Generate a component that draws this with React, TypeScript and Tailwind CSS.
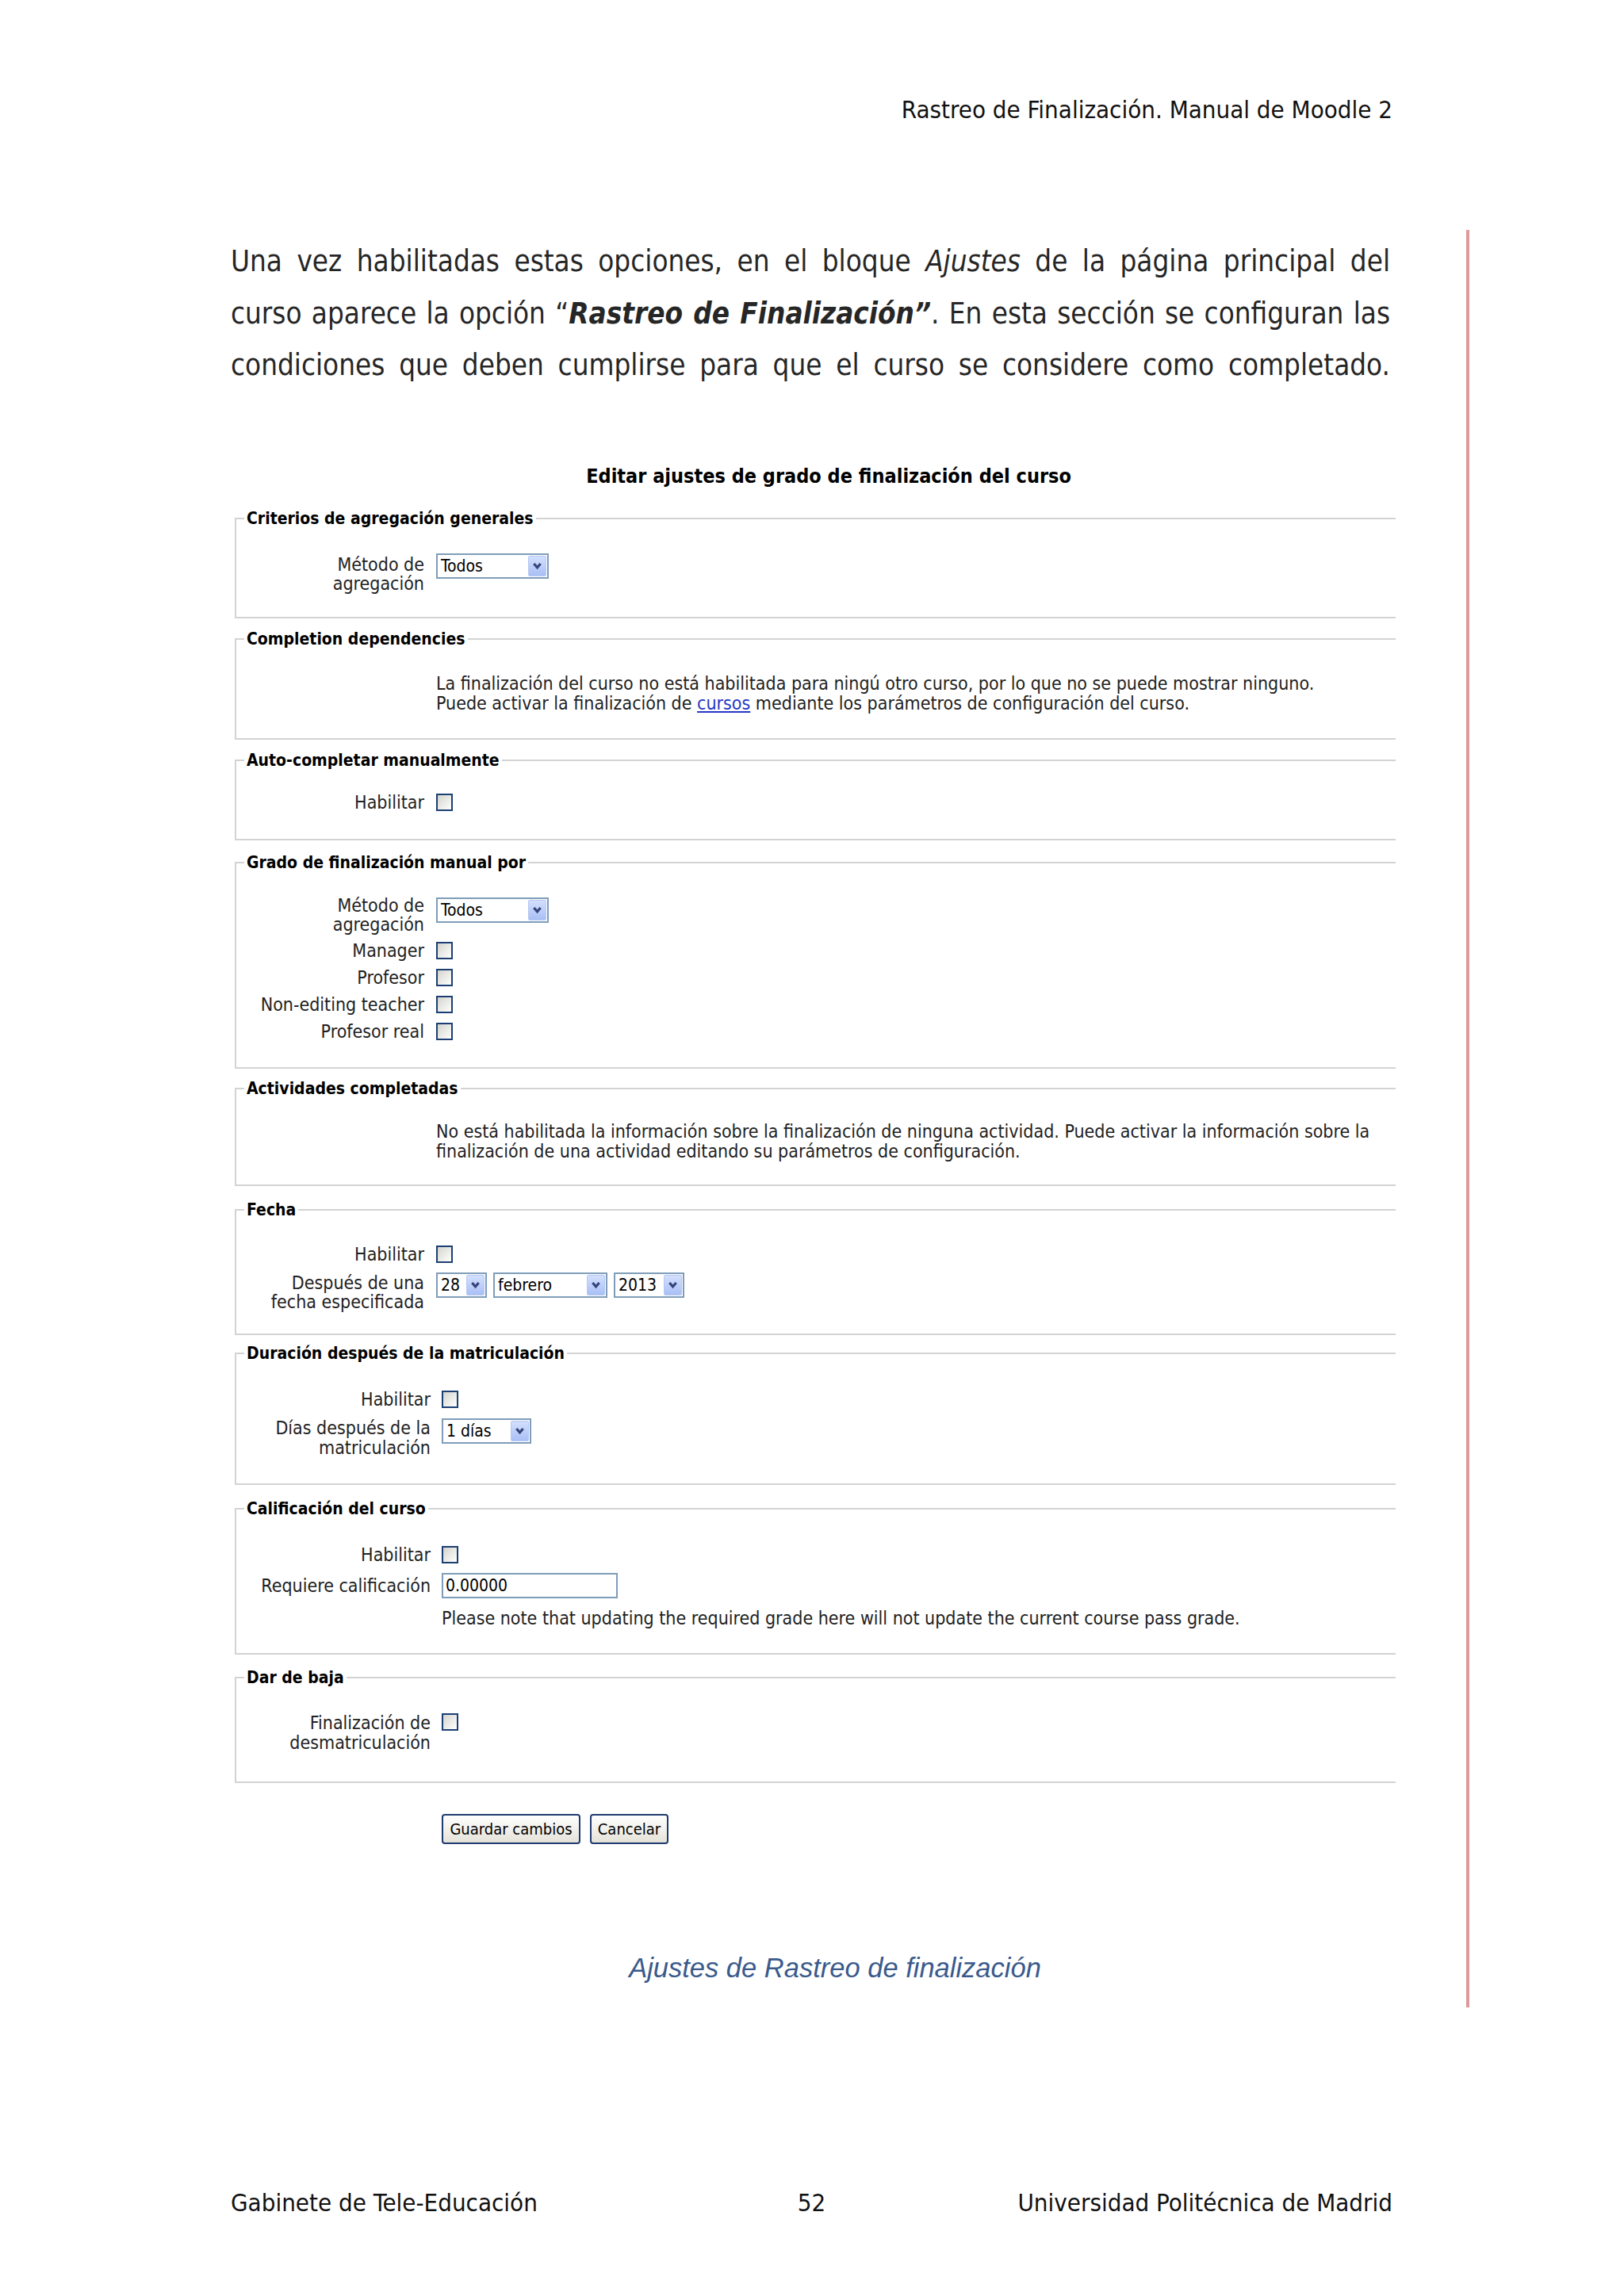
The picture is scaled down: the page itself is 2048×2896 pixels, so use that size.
import React from 'react';

const Chevron = () => (
  <svg viewBox="0 0 10 10" className="h-[13px] w-[13px]">
    <path d="M1.8 3 L5 6.8 L8.2 3" fill="none" stroke="#34457a" strokeWidth="2.4" />
  </svg>
);

const Select: React.FC<{ value: string; className?: string }> = ({ value, className = '' }) => (
  <div className={`flex h-[32px] items-stretch border-2 border-[#7f9db9] bg-white ${className}`}>
    <span className="flex-1 overflow-hidden whitespace-nowrap pl-[4px] text-[21px] leading-[28px] text-black">{value}</span>
    <span className="m-[1px] flex w-[23px] items-center justify-center rounded-[2px] border border-[#b6c8f4] bg-linear-to-b from-[#d3dffd] to-[#a9bff5]">
      <Chevron />
    </span>
  </div>
);

const Check = () => (
  <span className="block h-[22px] w-[21px] border-2 border-[#1c3f73] bg-linear-to-br from-[#d4d4ce] to-white" />
);

const Legend: React.FC<{ children: React.ReactNode }> = ({ children }) => (
  <legend className="ml-[10px] px-[3px] text-[21px] font-bold leading-[24px] text-black">{children}</legend>
);

export default function App() {
  return (
    <div className="h-[2896px] w-[2048px] overflow-hidden bg-white font-['DejaVu_Sans_Condensed','DejaVu_Sans',sans-serif] [font-stretch:condensed]">
      {/* Running header */}
      <div className="ml-[291px] w-[1465px] pt-[120px] text-right text-[31px] leading-[36px] text-[#111]">
        Rastreo de Finalización. Manual de Moodle 2
      </div>

      {/* Body with the pink margin rule */}
      <div className="mt-[134px] ml-[291px] w-[1562px] border-r-4 border-[#dc9a9c] pr-[96px] pt-[7px] pb-[30px]">
        <div className="text-[36.5px] leading-[65.5px] text-[#262626]">
          <div className="text-justify [text-align-last:justify]">
            Una vez habilitadas estas opciones, en el bloque <i>Ajustes</i> de la página principal del
          </div>
          <div className="text-justify [text-align-last:justify]">
            curso aparece la opción “<b><i>Rastreo de Finalización”</i></b>. En esta sección se configuran las
          </div>
          <div className="text-justify [text-align-last:justify]">
            condiciones que deben cumplirse para que el curso se considere como completado.
          </div>
        </div>

        {/* Moodle form screenshot */}
        <div className="text-[23px] text-[#222]">
          <div className="mt-[93px] pl-[46px] text-center text-[25px] font-bold leading-[28px] text-black">
            Editar ajustes de grado de finalización del curso
          </div>

          <fieldset className="mt-[27px] ml-[5px] w-[1464px] border-2 border-r-0 border-[#d3d3d3] pt-[32px] pb-[30px]">
            <Legend>Criterios de agregación generales</Legend>
            <div className="flex items-start">
              <div className="mt-[2px] w-[237px] text-right leading-[24px]">Método de<br />agregación</div>
              <Select value="Todos" className="ml-[15px] w-[142px]" />
            </div>
          </fieldset>

          <fieldset className="mt-[14px] ml-[5px] w-[1464px] border-2 border-r-0 border-[#d3d3d3] pt-[32px] pb-[31px]">
            <Legend>Completion dependencies</Legend>
            <div className="ml-[252px] leading-[25px]">
              La finalización del curso no está habilitada para ningú otro curso, por lo que no se puede mostrar ninguno.<br />
              Puede activar la finalización de <span className="text-[#2438c4] underline">cursos</span> mediante los parámetros de configuración del curso.
            </div>
          </fieldset>

          <fieldset className="mt-[14px] ml-[5px] w-[1464px] border-2 border-r-0 border-[#d3d3d3] pt-[31px] pb-[35px]">
            <Legend>Auto-completar manualmente</Legend>
            <div className="flex h-[21px] items-center">
              <div className="w-[237px] text-right leading-[24px]">Habilitar</div>
              <span className="ml-[15px]"><Check /></span>
            </div>
          </fieldset>

          <fieldset className="mt-[16px] ml-[5px] w-[1464px] border-2 border-r-0 border-[#d3d3d3] pt-[30px] pb-[28px]">
            <Legend>Grado de finalización manual por</Legend>
            <div className="mb-[4px] flex items-start">
              <div className="w-[237px] text-right leading-[24px]">Método de<br />agregación</div>
              <Select value="Todos" className="mt-[2px] ml-[15px] w-[142px]" />
            </div>
            {['Manager', 'Profesor', 'Non-editing teacher', 'Profesor real'].map((r) => (
              <div key={r} className="flex h-[34px] items-center">
                <div className="w-[237px] text-right leading-[24px]">{r}</div>
                <span className="ml-[15px]"><Check /></span>
              </div>
            ))}
          </fieldset>

          <fieldset className="mt-[13px] ml-[5px] w-[1464px] border-2 border-r-0 border-[#d3d3d3] pt-[30px] pb-[29px]">
            <Legend>Actividades completadas</Legend>
            <div className="ml-[252px] leading-[25px]">
              No está habilitada la información sobre la finalización de ninguna actividad. Puede activar la información sobre la<br />
              finalización de una actividad editando su parámetros de configuración.
            </div>
          </fieldset>

          <fieldset className="mt-[18px] ml-[5px] w-[1464px] border-2 border-r-0 border-[#d3d3d3] pt-[27px] pb-[28px]">
            <Legend>Fecha</Legend>
            <div className="flex h-[34px] items-center">
              <div className="w-[237px] text-right leading-[24px]">Habilitar</div>
              <span className="ml-[15px]"><Check /></span>
            </div>
            <div className="mt-[6px] flex items-start">
              <div className="mt-[1px] w-[237px] text-right leading-[24px]">Después de una<br />fecha especificada</div>
              <div className="ml-[15px] flex gap-[8px]">
                <Select value="28" className="w-[64px]" />
                <Select value="febrero" className="w-[144px]" />
                <Select value="2013" className="w-[89px]" />
              </div>
            </div>
          </fieldset>

          <fieldset className="mt-[11px] ml-[5px] w-[1464px] border-2 border-r-0 border-[#d3d3d3] pt-[29px] pb-[32px]">
            <Legend>Duración después de la matriculación</Legend>
            <div className="flex h-[34px] items-center">
              <div className="w-[245px] text-right leading-[24px]">Habilitar</div>
              <span className="ml-[14px]"><Check /></span>
            </div>
            <div className="mt-[7px] flex items-start">
              <div className="w-[245px] text-right leading-[25px]">Días después de la<br />matriculación</div>
              <Select value="1 días" className="ml-[14px] w-[113px]" />
            </div>
          </fieldset>

          <fieldset className="mt-[18px] ml-[5px] w-[1464px] border-2 border-r-0 border-[#d3d3d3] pt-[29px] pb-[32px]">
            <Legend>Calificación del curso</Legend>
            <div className="flex h-[34px] items-center">
              <div className="w-[245px] text-right leading-[24px]">Habilitar</div>
              <span className="ml-[14px]"><Check /></span>
            </div>
            <div className="mt-[6px] flex items-center">
              <div className="w-[245px] text-right leading-[24px]">Requiere calificación</div>
              <div className="ml-[14px] h-[32px] w-[222px] border-2 border-[#7f9db9] bg-white pl-[3px] text-[21px] leading-[28px] text-black">
                0.00000
              </div>
            </div>
            <div className="mt-[13px] ml-[259px] leading-[24px]">
              Please note that updating the required grade here will not update the current course pass grade.
            </div>
          </fieldset>

          <fieldset className="mt-[17px] ml-[5px] w-[1464px] border-2 border-r-0 border-[#d3d3d3] pt-[33px] pb-[36px]">
            <Legend>Dar de baja</Legend>
            <div className="flex items-start">
              <div className="w-[245px] text-right leading-[25px]">Finalización de<br />desmatriculación</div>
              <span className="ml-[14px]"><Check /></span>
            </div>
          </fieldset>

          <div className="mt-[39px] ml-[266px] flex gap-[12px]">
            <button className="h-[38px] w-[175px] whitespace-nowrap rounded-[4px] border-2 border-[#1f3b6e] bg-linear-to-b from-white to-[#e4e2d8] text-[20px] text-black">
              Guardar cambios
            </button>
            <button className="h-[38px] w-[99px] whitespace-nowrap rounded-[4px] border-2 border-[#1f3b6e] bg-linear-to-b from-white to-[#e4e2d8] text-[20px] text-black">
              Cancelar
            </button>
          </div>
        </div>

        <div className="mt-[136px] pl-[62px] text-center font-['Liberation_Sans',Arial,sans-serif] text-[34.5px] italic leading-[40px] text-[#3a5a8c] [font-stretch:normal]">
          Ajustes de Rastreo de finalización
        </div>
      </div>

      {/* Footer */}
      <div className="mt-[228px] ml-[291px] grid w-[1465px] grid-cols-3 text-[31px] leading-[36px] text-[#111]">
        <span>Gabinete de Tele-Educación</span>
        <span className="text-center">52</span>
        <span className="whitespace-nowrap text-right">Universidad Politécnica de Madrid</span>
      </div>
    </div>
  );
}
